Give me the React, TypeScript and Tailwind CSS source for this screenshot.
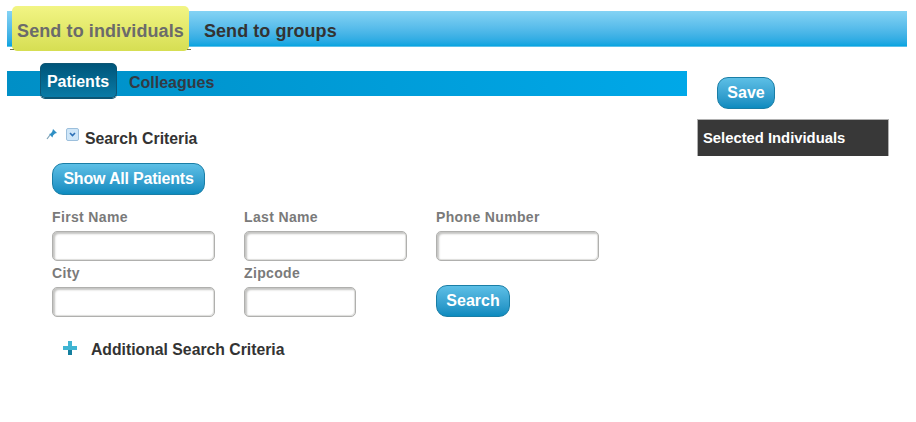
const blueButton =
  "rounded-[11px] border border-[#1a7ea6] bg-gradient-to-b from-[#5cbfe6] to-[#0a8bbf] font-bold text-white leading-none"
const inputBox =
  "h-[30px] rounded-[5px] border border-[#b0b0ae] shadow-[inset_2px_2px_2px_#c4c4c2,inset_-1px_-1px_1px_#dddddb] bg-white block"
const labelText = "block text-[14px] tracking-[0.35px] leading-[16px] font-bold text-[#7a7a7a] mb-[6px]"

function Field({ label, width }: { label: string; width: string }) {
  return (
    <label className="block w-[192px]">
      <span className={labelText}>{label}</span>
      <input className={`${inputBox} ${width}`} />
    </label>
  )
}

export default function App() {
  return (
    <div className="w-[916px] h-[422px] overflow-hidden bg-white font-['Liberation_Sans',Arial,sans-serif] pt-[11px] pl-[7px]">
      {/* Top tabs */}
      <div className="w-[900px] h-[36px] flex items-start bg-gradient-to-b from-[#84d3f4] to-[#04a4e0] border-b border-[#5cc0ea]">
        <div className="relative ml-[5px] -mt-[5px] w-[177px] h-[45px] rounded-[5px] bg-gradient-to-b from-[#f2f584] to-[#d6de52] pt-[6px] flex items-center justify-center text-[18px] tracking-[0.1px] font-bold text-[#6b6b6b]">
          Send to individuals
          {/* dark folded corners under the tab */}
          <span className="absolute left-[-2px] bottom-[1px] w-[4px] h-[1px] bg-[#77784a]" />
          <span className="absolute right-[-2px] bottom-[1px] w-[4px] h-[1px] bg-[#77784a]" />
        </div>
        <div className="ml-[15px] h-[35px] pt-[5px] flex items-center text-[18px] tracking-[0.05px] font-bold text-[#333333]">Send to groups</div>
      </div>

      <div className="flex mt-[24px]">
        {/* Left column */}
        <div className="w-[680px]">
          <div className="h-[25px] flex items-center bg-gradient-to-r from-[#008fc6] to-[#00a8e8]">
            <div className="ml-[33px] w-[77px] h-[35px] -mt-[6px] pt-[3px] pr-[1px] rounded-[5px] border border-[#0d5674] shadow-[0_1px_0_#0d5674] bg-gradient-to-b from-[#00557a] to-[#0a7ba6] flex items-center justify-center text-[16px] font-bold text-white">
              Patients
            </div>
            <div className="ml-[12px] -mt-[2px] text-[16px] font-bold text-[#333a44]">Colleagues</div>
          </div>

          <div className="flex items-start mt-[33px] ml-[39px] h-[20px]">
            <svg width="12" height="12" viewBox="0 0 12 12" className="-mt-[1px]">
              <path d="M7 1l4 4-2 .6-2 2-.5 1.900L3 6l1.900-.6 1.500-2.100z" fill="#2f8fc4" />
              <path d="M4 7L1 11" stroke="#7fa3b8" strokeWidth="1.200" />
            </svg>
            <svg width="13" height="13" viewBox="0 0 13 13" className="ml-[8px] -mt-[1px]">
              <rect x="0.500" y="0.500" width="12" height="12" rx="1.500" fill="#cfe6f8" stroke="#9cbfdc" />
              <path d="M4 5l2.500 2.500L9 5" fill="none" stroke="#2d6fb5" strokeWidth="1.600" />
            </svg>
            <span className="ml-[6px] text-[15.8px] leading-[20px] font-bold text-[#333333]">Search Criteria</span>
          </div>

          <button className={`${blueButton} block ml-[45px] mt-[14px] w-[153px] h-[32px] text-[16px] tracking-[-0.2px]`}>Show All Patients</button>

          <div className="ml-[45px] mt-[14px]">
            <div className="flex">
              <Field label="First Name" width="w-[163px]" />
              <Field label="Last Name" width="w-[163px]" />
              <Field label="Phone Number" width="w-[163px]" />
            </div>
            <div className="flex mt-[4px]">
              <Field label="City" width="w-[163px]" />
              <Field label="Zipcode" width="w-[112px]" />
              <button className={`${blueButton} self-end w-[74px] h-[32px] text-[16px]`}>Search</button>
            </div>
          </div>

          <div className="flex items-center ml-[56px] mt-[22px] h-[22px]">
            <svg width="14" height="14" viewBox="0 0 14 14" className="-mt-[4px]">
              <path d="M5 0h4v5h5v4H9v5H5V9H0V5h5z" fill="#3fb4d2" />
              <path d="M5 9h4v5H5z" fill="#157f9e" />
            </svg>
            <span className="ml-[14px] text-[15.75px] font-bold text-[#333333]">Additional Search Criteria</span>
          </div>
        </div>

        {/* Right column */}
        <div className="ml-[11px] w-[191px]">
          <button className={`${blueButton} block ml-[19px] mt-[6px] w-[58px] h-[32px] text-[16px]`}>Save</button>
          <div className="-ml-[1px] mt-[10px] h-[37px] w-[192px] border-x border-t border-[#b0b0b0] bg-[#383838] flex items-center pl-[5px] text-[14.8px] font-bold text-white">
            Selected Individuals
          </div>
        </div>
      </div>
    </div>
  )
}
